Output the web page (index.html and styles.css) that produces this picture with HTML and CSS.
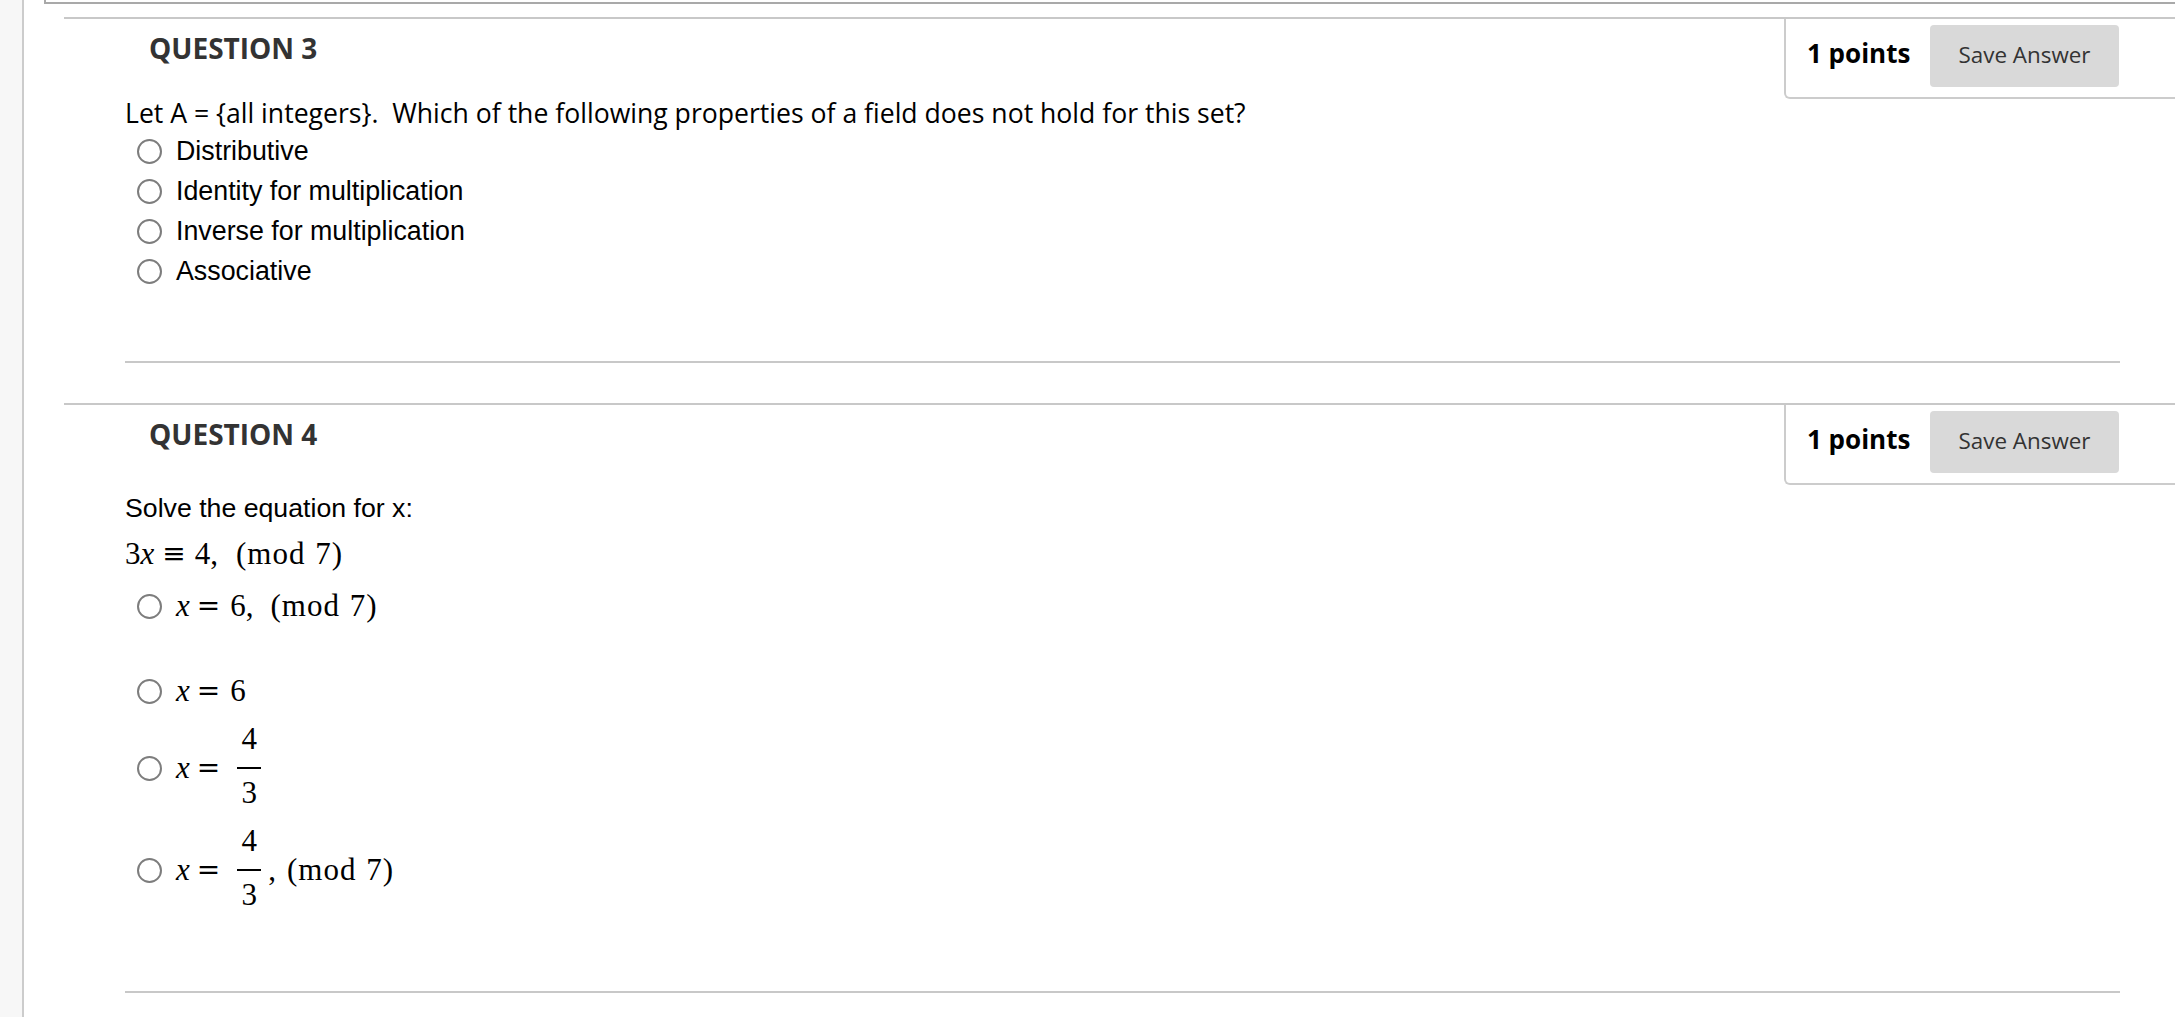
FILE: index.html
```html
<!DOCTYPE html>
<html>
<head>
<meta charset="utf-8">
<title>Test</title>
<link rel="stylesheet" href="styles.css">
</head>
<body>
<div class="page">
  <div class="strip"></div>
  <div class="main">
    <div class="stub"></div>
    <div class="qlist">
      <div class="question">
        <div class="qhead">
          <h3 class="qtitle">QUESTION 3</h3>
          <div class="points">
            <span class="pts">1 points</span>
            <button class="save">Save Answer</button>
          </div>
        </div>
        <div class="qbody qbody-3">
          <div class="qtext">Let A = {all integers}.&nbsp; Which of the following properties of a field does not hold for this set?</div>
          <label class="opt"><input type="radio" name="q3"><span>Distributive</span></label>
          <label class="opt"><input type="radio" name="q3"><span>Identity for multiplication</span></label>
          <label class="opt"><input type="radio" name="q3"><span>Inverse for multiplication</span></label>
          <label class="opt"><input type="radio" name="q3"><span>Associative</span></label>
        </div>
      </div>

      <div class="question q4">
        <div class="qhead">
          <h3 class="qtitle">QUESTION 4</h3>
          <div class="points">
            <span class="pts">1 points</span>
            <button class="save">Save Answer</button>
          </div>
        </div>
        <div class="qbody qbody-4">
          <p class="solve">Solve the equation for x:</p>
          <div class="math eq"><span>3</span><i class="mi">x</i><span class="rel">≡</span><span class="four">4</span><span class="comma c-eq">,</span><span class="mod">(mod 7)</span></div>
          <label class="mopt mopt-1"><input type="radio" name="q4"><span class="math"><i class="mi">x</i><span class="eqs">=</span><span class="six">6</span><span class="comma c-1">,</span><span class="mod">(mod 7)</span></span></label>
          <label class="mopt mopt-2"><input type="radio" name="q4"><span class="math"><i class="mi">x</i><span class="eqs">=</span><span class="six">6</span></span></label>
          <label class="mopt mopt-3"><input type="radio" name="q4"><span class="math"><i class="mi">x</i><span class="eqs">=</span><span class="frac"><span class="num">4</span><span class="bar"></span><span class="den">3</span></span></span></label>
          <label class="mopt mopt-4"><input type="radio" name="q4"><span class="math"><i class="mi">x</i><span class="eqs">=</span><span class="frac"><span class="num">4</span><span class="bar"></span><span class="den">3</span></span><span class="comma c-4">,</span><span class="mod">(mod 7)</span></span></label>
        </div>
      </div>
    </div>
  </div>
</div>
</body>
</html>
```

FILE: styles.css
```css
* { box-sizing: border-box; }
html, body { margin: 0; padding: 0; background: #fff; }
body { width: 2175px; height: 1017px; overflow: hidden; }

.page { display: flex; min-height: 1017px; }
.strip { width: 24px; flex: none; background: #f7f7f7; border-right: 2px solid #cccccc; }
.main { flex: 1; min-width: 0; }

.stub { margin-left: 20px; height: 4px; border-left: 2px solid #a9a9a9; border-bottom: 2px solid #a9a9a9; }

.qlist { margin-left: 40px; margin-top: 13px; }

.question { border-top: 2px solid #c8c8c8; }
.q4 { margin-top: 40px; }

.qhead { display: flex; justify-content: space-between; align-items: flex-start; }
.qtitle { margin: 0; padding: 12px 0 0 85px; font-family: "Open Sans", sans-serif; font-weight: 700; font-size: 28px; line-height: 34px; color: #333; }

.points {
  width: 391px; height: 80px; margin-bottom: -34px;
  display: flex; align-items: center;
  padding: 0 56px 4px 21px;
  border-left: 2px solid #cccccc; border-bottom: 2px solid #cccccc;
  border-bottom-left-radius: 6px;
  background: #fff;
}
.pts { font-family: "Open Sans", sans-serif; font-weight: 700; font-size: 26px; color: #000; margin-top: -6px; }
.save {
  margin-left: auto; width: 189px; height: 62px; border: 0; border-radius: 4px;
  background: #d9d9d9; color: #333; font-family: "Open Sans", sans-serif; font-size: 22.4px; padding: 0 0 3px;
}

.qbody { margin: 0 55px 0 61px; border-bottom: 2px solid #c8c8c8; }
.qbody-3 { padding: 30px 0 70px; }
.qbody-4 { padding: 39px 0 80px; }

.qtext { font-family: "Open Sans", sans-serif; font-size: 26.6px; line-height: 36px; color: #000; }

.opt { display: flex; align-items: center; height: 40px; font-family: "Liberation Sans", Arial, sans-serif; font-size: 26.8px; line-height: 40px; color: #000; }

input[type=radio] {
  -webkit-appearance: none; appearance: none; margin: 0 14px 0 12px; flex: none;
  width: 25px; height: 25px; border: 2px solid #7d7d7d; border-radius: 50%; background: #fff;
}

.solve { margin: 0; font-family: "Liberation Sans", Arial, sans-serif; font-size: 26.7px; line-height: 36px; color: #000; }

.math { font-family: "Liberation Serif", "Times New Roman", serif; font-size: 31px; line-height: 40px; color: #000; display: flex; align-items: center; white-space: nowrap; }
.eq { margin-top: 8px; height: 40px; }
.mi { font-style: italic; }
.rel { font-family: "DejaVu Serif", serif; font-size: 28px; margin-left: 8px; }
.four { margin-left: 9px; }
.eqs { font-family: "DejaVu Serif", serif; font-size: 28px; margin-left: 7px; }
.six { margin-left: 10px; }
.c-eq { margin-right: 18px; }
.c-1 { margin-right: 17px; }
.c-4 { margin-left: 5px; margin-right: 11px; }
.mod { letter-spacing: 1px; word-spacing: 1px; }

.mopt { display: flex; align-items: center; }
.mopt-1 { height: 40px; margin-top: 12px; }
.mopt-2 { height: 40px; margin-top: 45px; }
.mopt-3 { height: 82px; margin-top: 16px; }
.mopt-4 { height: 82px; margin-top: 20px; }

.frac { display: inline-flex; flex-direction: column; align-items: center; padding: 0 2px; margin: -4px 0 0 15px; }
.num { line-height: 30px; padding-bottom: 13px; }
.den { line-height: 30px; padding-top: 9px; }
.bar { width: 24px; height: 2px; background: #000; }
```
